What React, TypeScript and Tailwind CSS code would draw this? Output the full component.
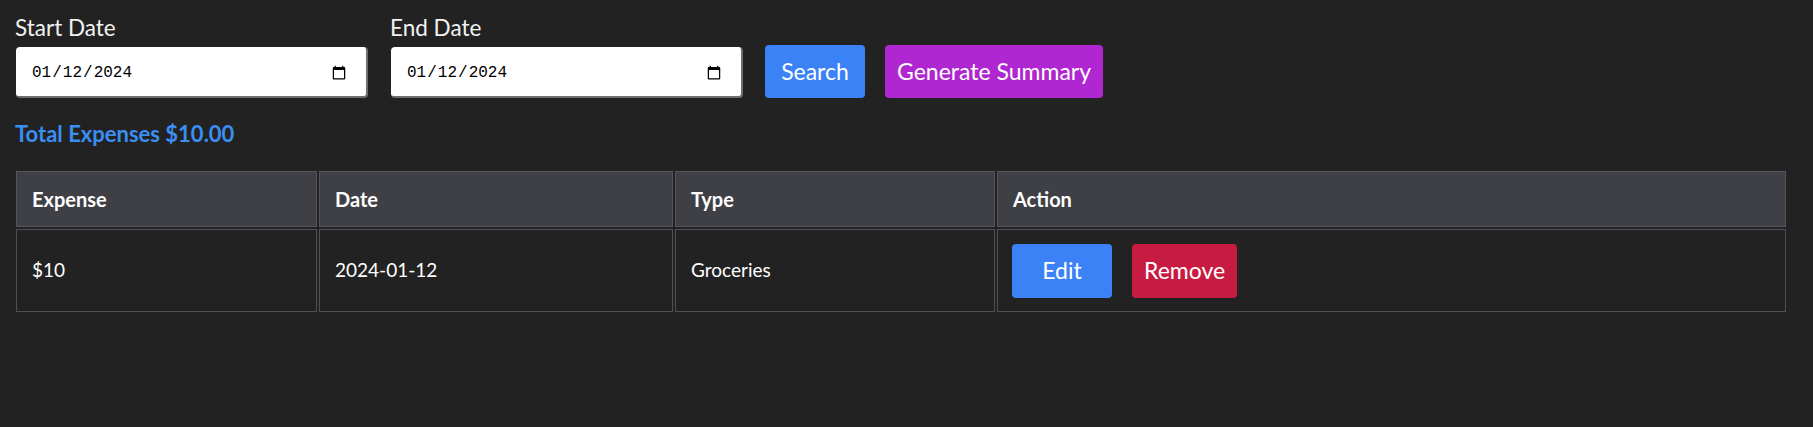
import { FC } from "react";

interface IExpense {
  amount: string;
  date: string;
  type: string;
}

const expenses: IExpense[] = [{ amount: "$10", date: "2024-01-12", type: "Groceries" }];

const DateField: FC<{ label: string; value: string }> = ({ label, value }) => {
  return (
    <div className="flex flex-col">
      <label className="text-[22.5px] leading-[29px] text-[#f2f2f2] mb-[5px] -ml-px">{label}</label>
      <input
        type="date"
        defaultValue={value}
        className="w-[352px] h-[51px] bg-white text-black rounded-[4px] border-r-2 border-b-2 border-[#6e6e6e] pl-[15px] pr-[17px] pt-[3px] text-[16px] font-['Liberation_Mono','DejaVu_Sans_Mono',monospace] outline-none"
      />
    </div>
  );
};

const App: FC = () => {
  return (
    <div className="min-h-[427px] w-full bg-[#222222] font-['Lato',sans-serif] text-white">
      <div className="flex items-end gap-[23px] pl-4 pt-[13px]">
        <DateField label="Start Date" value="2024-01-12" />
        <DateField label="End Date" value="2024-01-12" />
        <div className="flex gap-5 ml-[-1px]">
          <button className="h-[53px] min-w-[100px] px-3 rounded-[4px] bg-[#3b82f6] text-[23px] text-white">
            Search
          </button>
          <button className="h-[53px] min-w-[100px] px-3 rounded-[4px] bg-[#b026d0] text-[23px] text-white">
            Generate Summary
          </button>
        </div>
      </div>

      <h2 className="mt-[23px] pl-[15px] text-[22px] leading-[25px] font-bold text-[#3b8ef2]">
        Total Expenses $10.00
      </h2>

      <div className="pl-[14px] mt-[23px]">
        <table className="w-[1774px] border-separate border-spacing-[2px] text-left">
          <thead>
            <tr>
              <th className="w-[301px] h-[56px] bg-[#3f3f46] border border-[#55555c] px-[15px] text-[20px] font-bold">Expense</th>
              <th className="w-[354px] h-[56px] bg-[#3f3f46] border border-[#55555c] px-[15px] text-[20px] font-bold">Date</th>
              <th className="w-[320px] h-[56px] bg-[#3f3f46] border border-[#55555c] px-[15px] text-[20px] font-bold">Type</th>
              <th className="h-[56px] bg-[#3f3f46] border border-[#55555c] px-[15px] text-[20px] font-bold">Action</th>
            </tr>
          </thead>
          <tbody>
            {expenses.map((e) => (
              <tr key={e.date}>
                <td className="h-[83px] border border-[#4f4f55] px-[15px] text-[19px]">{e.amount}</td>
                <td className="h-[83px] border border-[#4f4f55] px-[15px] text-[19px]">{e.date}</td>
                <td className="h-[83px] border border-[#4f4f55] px-[15px] text-[19px]">{e.type}</td>
                <td className="h-[83px] border border-[#4f4f55] px-[14px]">
                  <div className="flex gap-5">
                    <button className="h-[54px] min-w-[100px] px-3 rounded-[4px] bg-[#3b82f6] text-[23px] text-white">
                      Edit
                    </button>
                    <button className="h-[54px] min-w-[100px] px-3 rounded-[4px] bg-[#c81b41] text-[23px] text-white">
                      Remove
                    </button>
                  </div>
                </td>
              </tr>
            ))}
          </tbody>
        </table>
      </div>
    </div>
  );
};

export default App;
